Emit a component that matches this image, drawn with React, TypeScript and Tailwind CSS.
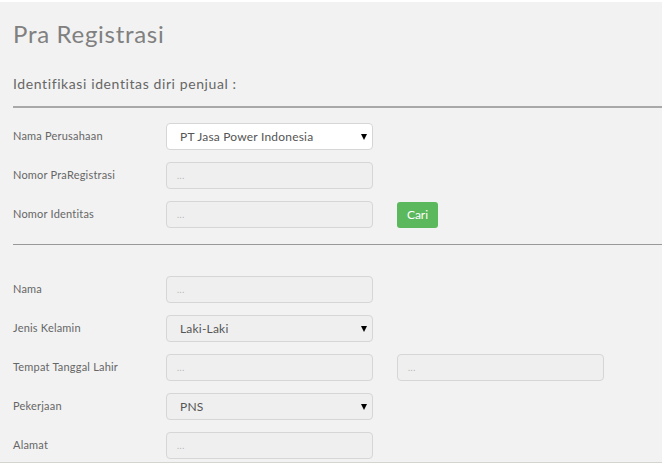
import React from 'react';

const font = { fontFamily: 'Lato, "Open Sans", sans-serif' };

function Field({ value, select, white }: { value?: string; select?: boolean; white?: boolean }) {
    return (
        <div
            className={`relative w-[207px] h-[27px] rounded-[4px] border border-[#d6d6d6] flex items-center ${white ? 'bg-white' : 'bg-[#efefef]'}`}
        >
            {value ? (
                <span className="pl-[13px] text-[12px] text-[#555] tracking-[0.2px]">{value}</span>
            ) : (
                <span className="pl-[10px] text-[9px] text-[#b5b5b5] tracking-wider">...</span>
            )}
            {select && (
                <span className="absolute right-[5px] top-[10px] w-0 h-0 border-l-[3px] border-r-[3px] border-t-[6px] border-l-transparent border-r-transparent border-t-black" />
            )}
        </div>
    );
}

function Row({ label, children }: { label: string; children: React.ReactNode }) {
    return (
        <div className="flex items-center h-[27px]">
            <div className="w-[153px] text-[11px] text-[#666] tracking-[0.2px]">{label}</div>
            <div className="flex items-center gap-[24px]">{children}</div>
        </div>
    );
}

export default function App() {
    return (
        <div className="w-[664px] h-[465px] bg-white overflow-hidden" style={font}>
            <div className="mt-[2px] w-[662px] h-[461px] bg-[#f2f2f2] border-b border-[#d5d5cf] overflow-hidden pl-[13px]">
                {/* --- HEADER --- */}
                <h1 className="pt-[17px] text-[24px] leading-[30px] text-[#808080] tracking-[0.7px]">Pra Registrasi</h1>
                <p className="mt-[26px] text-[14px] leading-[18px] text-[#666] tracking-[0.6px]">Identifikasi identitas diri penjual :</p>
                <div className="mt-[13px] h-[2px] bg-[#a9a9a9]" />

                {/* --- PENJUAL --- */}
                <div className="mt-[15px] flex flex-col gap-[12px]">
                    <Row label="Nama Perusahaan">
                        <Field value="PT Jasa Power Indonesia" select white />
                    </Row>
                    <Row label="Nomor PraRegistrasi">
                        <Field />
                    </Row>
                    <Row label="Nomor Identitas">
                        <Field />
                        <button className="w-[41px] h-[26px] rounded-[3px] bg-[#5cb85c] text-white text-[12px]">Cari</button>
                    </Row>
                </div>
                <div className="mt-[16px] h-[1px] bg-[#999]" />

                {/* --- DATA DIRI --- */}
                <div className="mt-[31px] flex flex-col gap-[12px]">
                    <Row label="Nama">
                        <Field />
                    </Row>
                    <Row label="Jenis Kelamin">
                        <Field value="Laki-Laki" select />
                    </Row>
                    <Row label="Tempat Tanggal Lahir">
                        <Field />
                        <Field />
                    </Row>
                    <Row label="Pekerjaan">
                        <Field value="PNS" select />
                    </Row>
                    <Row label="Alamat">
                        <Field />
                    </Row>
                </div>
            </div>
        </div>
    );
}
